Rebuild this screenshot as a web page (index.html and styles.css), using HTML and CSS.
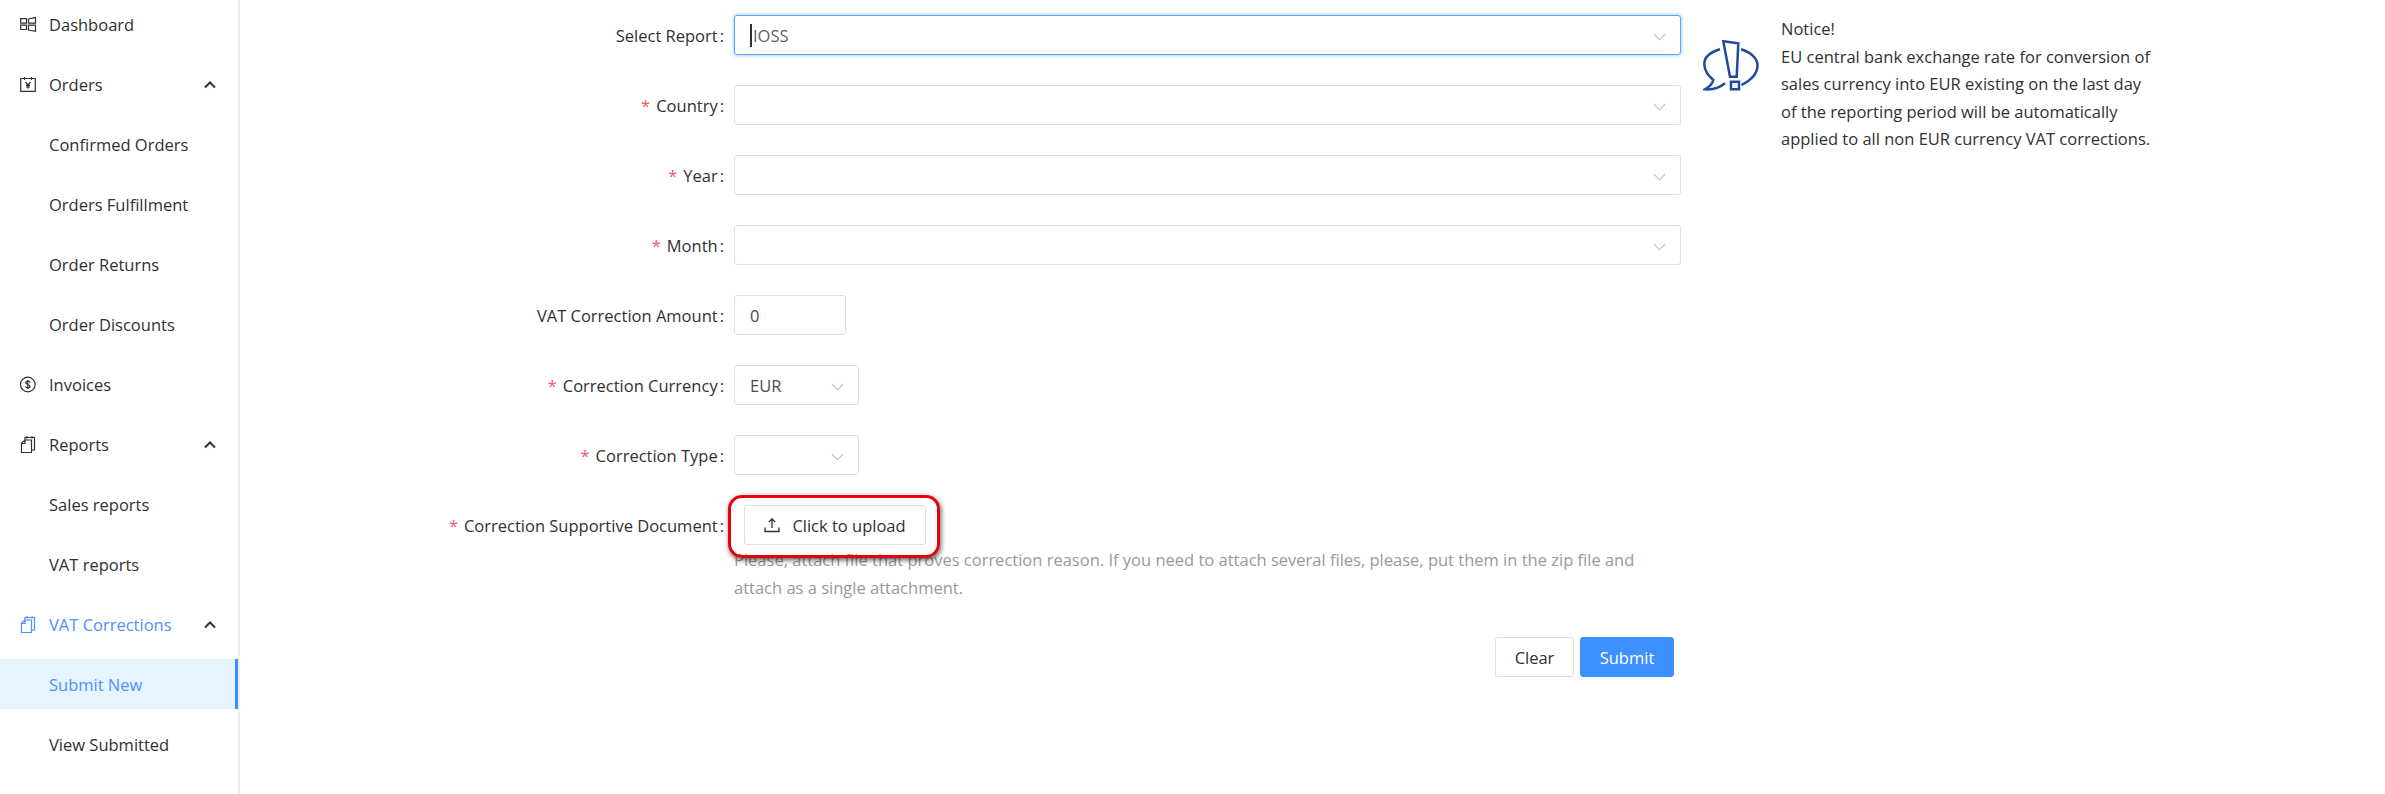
FILE: index.html
```html
<!DOCTYPE html>
<html lang="en">
<head>
<meta charset="utf-8">
<title>Submit New</title>
<link rel="stylesheet" href="styles.css">
</head>
<body>
<div class="app">
  <nav class="sidebar">
    <a class="item"><svg class="ico" viewBox="0 0 16 16"><path d="M.7 1.700h5.800v4.500H.7zM8.500 2L15.500 .6V6.200H8.500zM.7 8.200h5.800v4.300H.7zM8.500 8.200H15.500V14.300L8.500 13z"/></svg><span>Dashboard</span></a>
    <a class="item"><svg class="ico" viewBox="0 0 16 16"><path d="M.7 1.500h14.600v12.800H.7zM4.500 0v3M11.500 0v3M5.500 5l2.500 3 2.500-3M8 8v3.500M6 8.300h4M6 10h4"/></svg><span>Orders</span><svg class="chev" viewBox="0 0 12 8"><path d="M1 6.500l5-5 5 5"/></svg></a>
    <a class="item sub">Confirmed Orders</a>
    <a class="item sub">Orders Fulfillment</a>
    <a class="item sub">Order Returns</a>
    <a class="item sub">Order Discounts</a>
    <a class="item"><svg class="ico" viewBox="0 0 16 16"><circle cx="7.800" cy="7.500" r="7.300"/><path d="M10 5.500c-.5-1-1.200-1.300-2.200-1.300-1.200 0-2.100.6-2.100 1.600 0 2.300 4.400 1 4.400 3.500 0 1.100-1 1.600-2.300 1.600-1.100 0-1.900-.5-2.300-1.300M7.800 3v9"/></svg><span>Invoices</span></a>
    <a class="item"><svg class="ico" viewBox="0 0 16 16"><path d="M5 3V.5h9.500V13H11.500M7 -1v2.500M12 -1v2.500"/><path d="M1.500 15.500V6L5 3H11.500V15.500zM5 3V6.500H1.500"/></svg><span>Reports</span><svg class="chev" viewBox="0 0 12 8"><path d="M1 6.500l5-5 5 5"/></svg></a>
    <a class="item sub">Sales reports</a>
    <a class="item sub">VAT reports</a>
    <a class="item open"><svg class="ico" viewBox="0 0 16 16"><path d="M5 3V.5h9.500V13H11.500M7 -1v2.500M12 -1v2.500"/><path d="M1.500 15.500V6L5 3H11.500V15.500zM5 3V6.500H1.500"/></svg><span>VAT Corrections</span><svg class="chev" viewBox="0 0 12 8"><path d="M1 6.500l5-5 5 5"/></svg></a>
    <a class="item sub active">Submit New</a>
    <a class="item sub">View Submitted</a>
  </nav>
  <main class="main">
    <form class="form">
      <div class="row">
        <label class="label">Select Report<span class="colon">:</span></label>
        <div class="select focus"><span class="caret"></span><span class="val">IOSS</span><svg class="arrow" viewBox="0 0 14 8"><path d="M1 1l6 6 6-6"/></svg></div>
      </div>
      <div class="row">
        <label class="label"><i>*</i>Country<span class="colon">:</span></label>
        <div class="select"><svg class="arrow" viewBox="0 0 14 8"><path d="M1 1l6 6 6-6"/></svg></div>
      </div>
      <div class="row">
        <label class="label"><i>*</i>Year<span class="colon">:</span></label>
        <div class="select"><svg class="arrow" viewBox="0 0 14 8"><path d="M1 1l6 6 6-6"/></svg></div>
      </div>
      <div class="row">
        <label class="label"><i>*</i>Month<span class="colon">:</span></label>
        <div class="select"><svg class="arrow" viewBox="0 0 14 8"><path d="M1 1l6 6 6-6"/></svg></div>
      </div>
      <div class="row">
        <label class="label">VAT Correction Amount<span class="colon">:</span></label>
        <div class="select amount"><span class="val dark">0</span></div>
      </div>
      <div class="row">
        <label class="label"><i>*</i>Correction Currency<span class="colon">:</span></label>
        <div class="select small"><span class="val dark">EUR</span><svg class="arrow" viewBox="0 0 14 8"><path d="M1 1l6 6 6-6"/></svg></div>
      </div>
      <div class="row">
        <label class="label"><i>*</i>Correction Type<span class="colon">:</span></label>
        <div class="select small"><svg class="arrow" viewBox="0 0 14 8"><path d="M1 1l6 6 6-6"/></svg></div>
      </div>
      <div class="row upload-row">
        <label class="label"><i>*</i>Correction Supportive Document<span class="colon">:</span></label>
        <div class="upload-col">
          <div class="upload-wrap">
            <button type="button" class="upload"><svg class="up" viewBox="0 0 16 16"><path d="M1 10.500V14.500H15V10.500M8 11V2M4.800 5L8 1.800 11.200 5"/></svg>Click to upload</button>
            <span class="mark"></span>
          </div>
          <p class="help">Please, attach file that proves correction reason. If you need to attach several files, please, put them in the zip file and attach as a single attachment.</p>
        </div>
      </div>
      <div class="actions">
        <button type="button" class="btn">Clear</button>
        <button type="button" class="btn primary">Submit</button>
      </div>
    </form>
    <aside class="notice">
      <svg class="notice-ico" viewBox="0 0 56 52"><path class="blue" d="M17 9.300C8 12 1.300 17 1.300 24c0 6 3 11 9 16-1 4-4 7-8.300 9.300 7 .7 13-.3 20-6M38 9.300c10 3 16.500 9 16.500 16 0 8-6.500 15-16 19.700"/><path class="blue" d="M20.300 1.300L35.300 3.300 33.700 36.700H27zM28 41.700h8v7.600h-8z"/></svg>
      <div class="notice-text">
        <div>Notice!</div>
        <div>EU central bank exchange rate for conversion of sales currency into EUR existing on the last day of the reporting period will be automatically applied to all non EUR currency VAT corrections.</div>
      </div>
    </aside>
  </main>
</div>
</body>
</html>
```
FILE: styles.css
```css
* { box-sizing: border-box; }
html, body { margin: 0; height: 100%; }
body { font-family: "Open Sans", "Noto Sans", sans-serif; font-size: 16.500px; color: #303133; background: #fff; overflow: hidden; }
.app { display: flex; height: 794px; }
.sidebar { width: 240px; flex: none; margin-top: -1px; border-right: 2px solid #e9eef5; display: flex; flex-direction: column; gap: 10px; }
.item { height: 50px; flex: none; display: flex; align-items: center; padding-left: 20px; color: #303133; position: relative; }
.ico { width: 16px; height: 16px; margin-top: 2px; margin-right: 13px; fill: none; stroke: #303133; stroke-width: 1.200; flex: none; overflow: visible; }
.chev { width: 12px; height: 8px; position: absolute; left: 204px; top: 22px; fill: none; stroke: #303133; stroke-width: 2; }
.sub { padding-left: 49px; }
.open { color: #4d90fe; }
.open .ico { stroke: #4d90fe; }
.active { color: #4d90fe; background: #e6f4ff; border-right: 3px solid #3b8cff; }
.main { flex: 1; display: flex; padding-top: 15px; min-width: 0; }
.form { width: 1441px; flex: none; }
.row { display: flex; height: 40px; margin-bottom: 30px; }
.label { width: 494px; flex: none; text-align: right; line-height: 42px; padding-right: 10px; color: #303133; white-space: nowrap; }
.label i { color: #f5566c; font-style: normal; margin-right: 6px; }
.colon { margin-left: 2px; }
.select { flex: none; width: 947px; height: 40px; border: 1px solid #dcdfe6; border-radius: 3px; display: flex; align-items: center; position: relative; padding-left: 15px; }
.select.focus { border-color: #5aa5f5; box-shadow: 0 0 3px 1px rgba(64,158,255,.4); }
.select.amount { width: 112px; }
.select.small { width: 125px; }
.caret { width: 2px; height: 23px; background: #303133; margin-right: 1px; }
.val { color: #606266; }
.val.dark { color: #4a4c50; }
.arrow { width: 13px; height: 8px; position: absolute; right: 14px; top: 17px; fill: none; stroke: #b8bcc4; stroke-width: 1.200; }
.upload-row { height: auto; margin-bottom: 35px; }
.upload-col { width: 947px; padding-left: 10px; }
.upload-wrap { position: relative; width: 182px; height: 40px; }
.upload { width: 182px; height: 40px; background: #fff; border: 1px solid #dcdfe6; border-radius: 3px; font: inherit; color: #303133; display: flex; align-items: center; justify-content: center; padding: 0; }
.up { width: 16px; height: 16px; margin-right: 12px; fill: none; stroke: #303133; stroke-width: 1.300; }
.mark { position: absolute; left: -16px; top: -10px; width: 212px; height: 63px; border: 3.500px solid #e8000f; border-radius: 14px; box-shadow: 1px 2px 5px rgba(0,0,0,.65); }
.help { margin: 1px 0 0 -10px; padding-right: 30px; line-height: 28px; color: #999; }
.actions { display: flex; justify-content: flex-end; gap: 6px; padding-right: 7px; }
.btn { height: 40px; width: 79px; border: 1px solid #dcdfe6; border-radius: 3px; background: #fff; font: inherit; color: #303133; padding: 0; }
.btn.primary { width: 94px; background: #3d90ff; border-color: #3d90ff; color: #fff; }
.notice { display: flex; margin-left: 22px; width: 460px; }
.notice-ico { width: 56px; height: 52px; margin-top: 25px; margin-right: 22px; flex: none; }
.blue { fill: none; stroke: #1e4b9b; stroke-width: 2.500; }
.notice-text { line-height: 27.500px; width: 374px; }
```
